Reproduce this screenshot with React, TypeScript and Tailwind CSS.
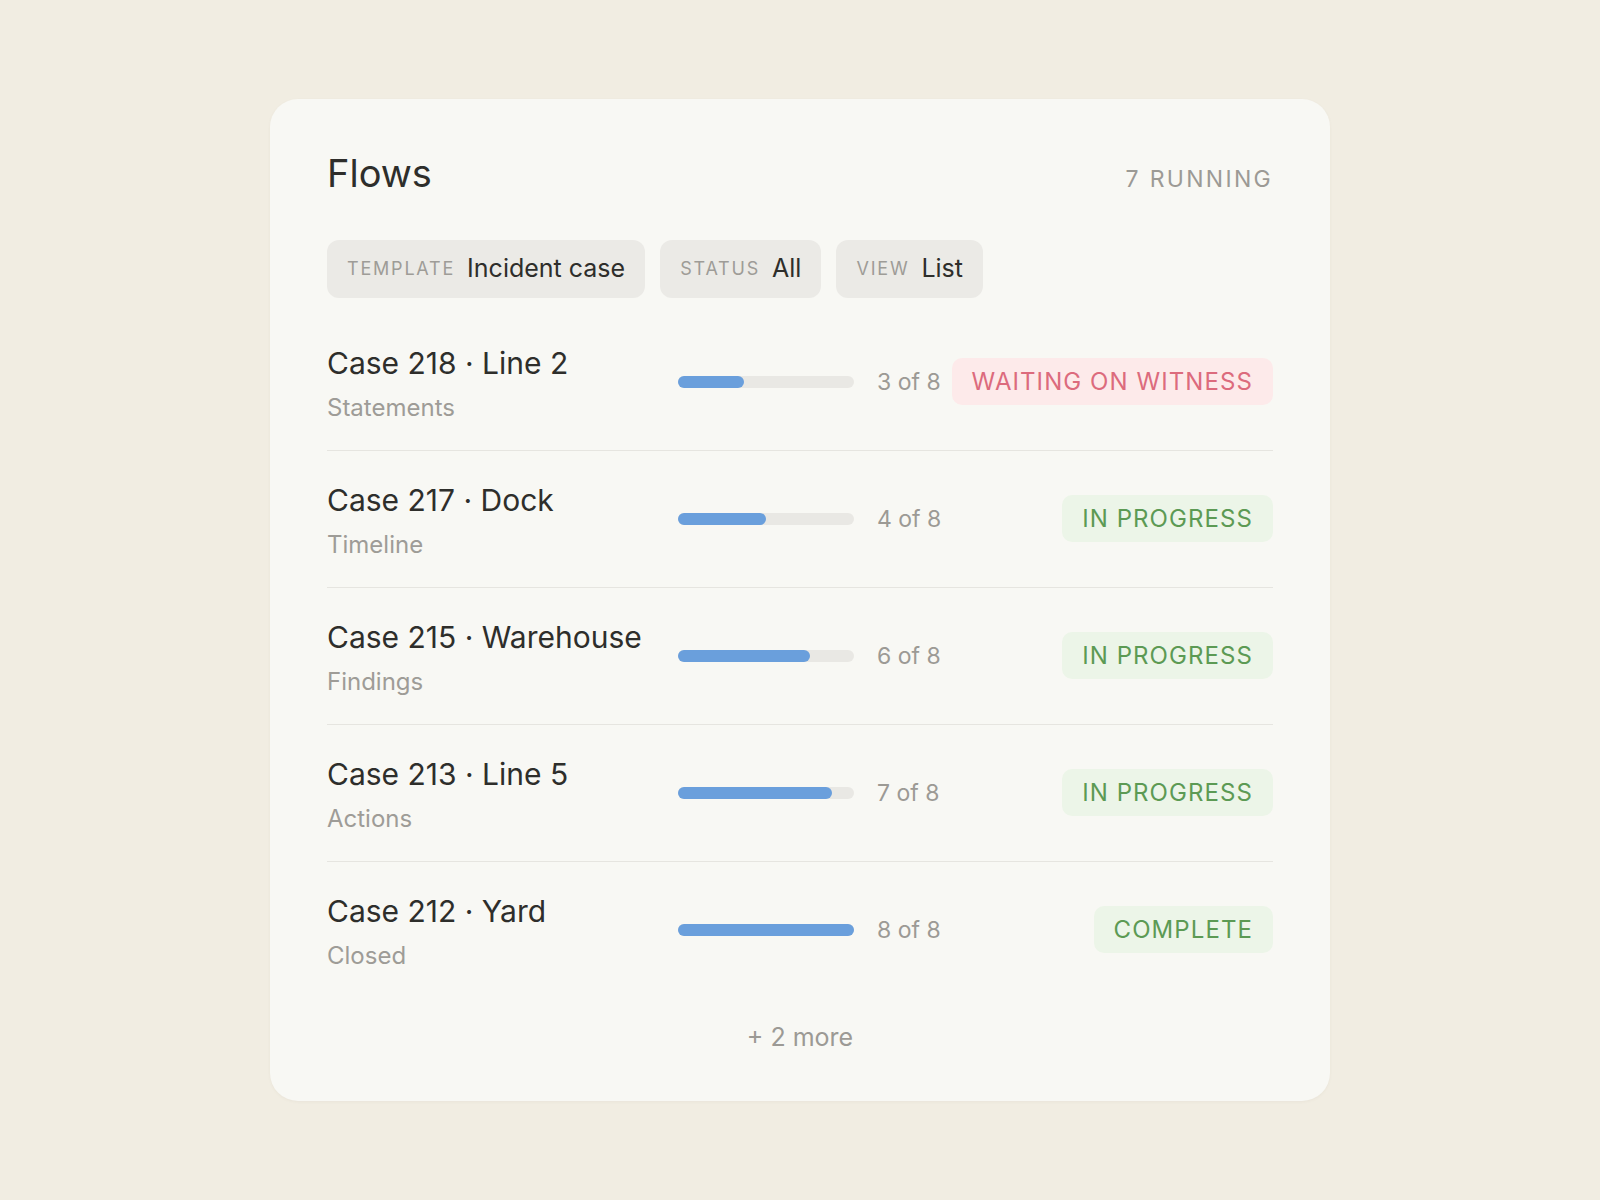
import React from 'react'

type Status = 'waiting' | 'progress' | 'complete'

const flows: { title: string; step: string; done: number; status: Status }[] = [
  { title: 'Case 218 · Line 2', step: 'Statements', done: 3, status: 'waiting' },
  { title: 'Case 217 · Dock', step: 'Timeline', done: 4, status: 'progress' },
  { title: 'Case 215 · Warehouse', step: 'Findings', done: 6, status: 'progress' },
  { title: 'Case 213 · Line 5', step: 'Actions', done: 7, status: 'progress' },
  { title: 'Case 212 · Yard', step: 'Closed', done: 8, status: 'complete' },
]

const TOTAL = 8

const filters = [
  { label: 'Template', value: 'Incident case' },
  { label: 'Status', value: 'All' },
  { label: 'View', value: 'List' },
]

function StatusBadge({ status }: { status: Status }) {
  if (status === 'waiting') {
    return (
      <span className="flex h-[47px] items-center whitespace-nowrap rounded-[10px] bg-[#fdeaea] px-[20px] text-[24px] uppercase tracking-[0.045em] text-[#dc6b7d]">
        Waiting on witness
      </span>
    )
  }
  return (
    <span className="flex h-[47px] items-center whitespace-nowrap rounded-[10px] bg-[#ecf5e8] px-[20px] text-[24px] uppercase tracking-[0.045em] text-[#5c9a54]">
      {status === 'complete' ? 'Complete' : 'In progress'}
    </span>
  )
}

export default function App() {
  return (
    <div
      className="flex min-h-screen items-center justify-center bg-[#f1ede2]"
      style={{ fontFamily: 'Inter, "Noto Sans", sans-serif' }}
    >
      <div className="w-[1060px] rounded-[28px] bg-[#f8f8f4] px-[57px] pt-[52px] pb-[50px] shadow-[0_1px_3px_rgba(120,110,80,0.06)]">
        <div className="flex items-baseline justify-between">
          <h1 className="text-[38px] leading-[44px] font-normal text-[#2e2e2b]">Flows</h1>
          <span className="text-[23px] uppercase tracking-[0.1em] text-[#9c9a95]">7 running</span>
        </div>

        <div className="mt-[43px] flex gap-[15px]">
          {filters.map((f) => (
            <div
              key={f.label}
              className="flex h-[58px] items-center gap-[12px] rounded-[12px] bg-[#ebeae6] px-[20px]"
            >
              <span className="text-[18px] uppercase tracking-[0.1em] text-[#9e9c97]">{f.label}</span>
              <span className="text-[25px] text-[#2e2e2b]">{f.value}</span>
            </div>
          ))}
        </div>

        <div className="mt-[16px]">
          {flows.map((row, i) => (
            <div
              key={row.title}
              className={
                i < flows.length - 1
                  ? 'flex h-[137px] items-center border-b border-[#e6e5e0]'
                  : 'flex h-[136px] items-center'
              }
            >
              <div className="flex-1 pt-[4px]">
                <div className="text-[30px] leading-[36px] text-[#2e2e2b]">{row.title}</div>
                <div className="mt-[13px] text-[24px] leading-[28px] text-[#9e9c97]">{row.step}</div>
              </div>
              <div className="h-[12px] w-[176px] rounded-full bg-[#e9e8e4]">
                <div
                  className="h-full rounded-full bg-[#6a9fdc]"
                  style={{ width: `${(row.done / TOTAL) * 100}%` }}
                />
              </div>
              <div className="w-[101px] pl-[23px] text-[23px] text-[#9c9a95]">
                {row.done} of {TOTAL}
              </div>
              <div className="flex w-[318px] justify-end">
                <StatusBadge status={row.status} />
              </div>
            </div>
          ))}
        </div>

        <div className="mt-[25px] text-center text-[25px] leading-[28px] text-[#9c9a95]">+ 2 more</div>
      </div>
    </div>
  )
}
